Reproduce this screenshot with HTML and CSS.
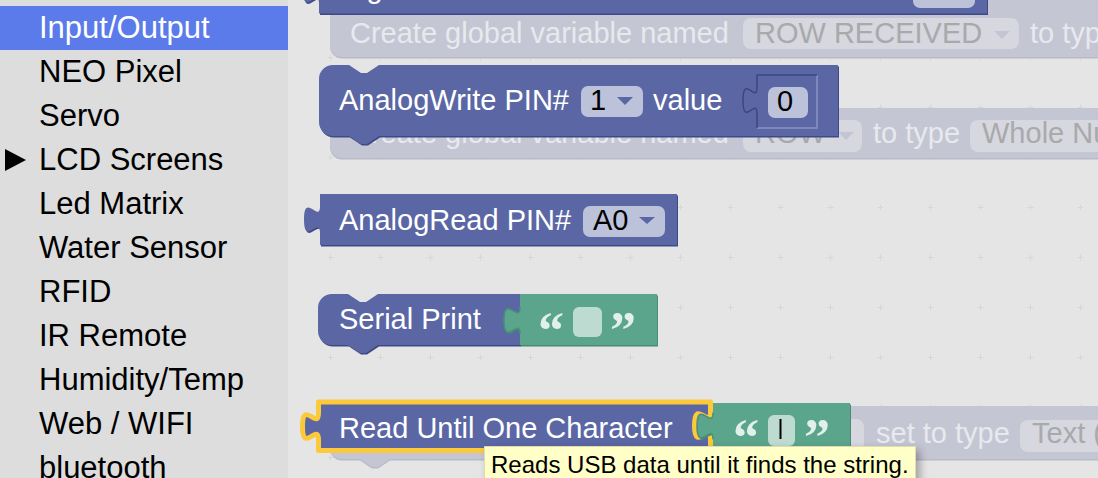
FILE: index.html
```html
<!DOCTYPE html>
<html>
<head>
<meta charset="utf-8">
<link rel="stylesheet" href="styles.css">
</head>
<body>
<div class="app">
  <nav class="toolbox">
    <div class="cat selected"><span class="twisty"></span>Input/Output</div>
    <div class="cat"><span class="twisty"></span>NEO Pixel</div>
    <div class="cat"><span class="twisty"></span>Servo</div>
    <div class="cat"><span class="twisty arrow"></span>LCD Screens</div>
    <div class="cat"><span class="twisty"></span>Led Matrix</div>
    <div class="cat"><span class="twisty"></span>Water Sensor</div>
    <div class="cat"><span class="twisty"></span>RFID</div>
    <div class="cat"><span class="twisty"></span>IR Remote</div>
    <div class="cat"><span class="twisty"></span>Humidity/Temp</div>
    <div class="cat"><span class="twisty"></span>Web / WIFI</div>
    <div class="cat"><span class="twisty"></span>bluetooth</div>
  </nav>
  <main class="workspace">
    <svg class="canvas" width="810" height="478" viewBox="288 0 810 478" xmlns="http://www.w3.org/2000/svg">
      <defs>
        <pattern id="grid" patternUnits="userSpaceOnUse" x="305" y="-18" width="50" height="50">
          <path class="gridmark" d="M22.5 25.5h6M25.5 22.5v6"/>
        </pattern>
      </defs>
      <rect x="288" y="0" width="810" height="478" fill="url(#grid)"/>

      <!-- faded blocks behind -->
      <g class="faded">
        <path class="fd-dark" d="M330,-20 H1110 V58.5 H342 A12,12 0 0 1 330,46.5 Z"/>
        <path class="fd" d="M330,-20 H1110 V57 H342 A12,12 0 0 1 330,45 Z"/>
        <text class="ft" x="350" y="43">Create global variable named</text>
        <rect class="fdd" x="743" y="18" width="276" height="31" rx="8"/>
        <text class="fdt" x="755" y="43">ROW RECEIVED</text>
        <polygon class="fda" points="994,31 1010,31 1002,39"/>
        <text class="ft" x="1030" y="43">to typ</text>

        <path class="fd-dark" d="M330,108 H1110 V159.5 H342 A12,12 0 0 1 330,147.5 Z"/>
        <path class="fd" d="M330,108 H1110 V158 H342 A12,12 0 0 1 330,146 Z"/>
        <text class="ft" x="350" y="143">Create global variable named</text>
        <rect class="fdd" x="743" y="120" width="119" height="32" rx="8"/>
        <text class="fdt" x="755" y="143">ROW</text>
        <polygon class="fda" points="838,132 854,132 846,140"/>
        <text class="ft" x="873" y="143">to type</text>
        <rect class="fdd" x="970" y="120" width="220" height="32" rx="8"/>
        <text class="fdt" x="982" y="143">Whole Nu</text>

        <path class="fd-dark" d="M330,406 H1110 V460.5 H390 l-12,8 h-6 l-12,-8 H342 A12,12 0 0 1 330,448.5 Z"/>
        <path class="fd" d="M330,406 H1110 V459 H390 l-12,8 h-6 l-12,-8 H342 A12,12 0 0 1 330,447 Z"/>
        <rect class="fdd" x="760" y="419" width="104" height="32" rx="8"/>
        <text class="ft" x="876" y="443">set to type</text>
        <rect class="fdd" x="1020" y="420" width="200" height="32" rx="8"/>
        <text class="fdt" x="1032" y="443">Text (</text>
      </g>

      <!-- top block (cut off) -->
      <path class="blue-dk" d="M319,-36 H987 V13.5 H319 V4 c0,-18 -16,14.4 -16,-13.5 s16,4.5 16,-13.5 Z" transform="translate(1,1.5)"/>
      <path class="blue" d="M319,-36 H987 V13.5 H319 V4 c0,-18 -16,14.4 -16,-13.5 s16,4.5 16,-13.5 Z"/>
      <text class="bt" x="339" y="-2">DigitalWrite PIN#</text>
      <rect class="fld" x="913" y="-24" width="62" height="32" rx="7"/>

      <!-- AnalogWrite -->
      <path class="blue-dk" d="M319,79 A14,14 0 0 1 333,65 H349 l12,8 h6 l12,-8 H838 V136 H379 l-12,8 h-6 l-12,-8 H333 A14,14 0 0 1 319,122 Z" transform="translate(1,1.5)"/>
      <path class="blue" d="M319,79 A14,14 0 0 1 333,65 H349 l12,8 h6 l12,-8 H838 V136 H379 l-12,8 h-6 l-12,-8 H333 A14,14 0 0 1 319,122 Z"/>
      <text class="bt" x="339" y="110">AnalogWrite PIN#</text>
      <rect class="fld" x="581" y="86" width="62" height="31" rx="7"/>
      <text class="vt" x="590" y="110">1</text>
      <polygon class="arr" points="617,97 633,97 625,105"/>
      <text class="bt" x="653" y="110">value</text>
      <path class="slot-lt" d="M817,75 V128 H757"/>
      <path class="slot-dk" d="M757,128 V114 c0,-18 -14,14.4 -14,-13.5 s14,4.5 14,-13.5 V75 H817"/>
      <rect class="fld" x="768" y="87" width="40" height="31" rx="7"/>
      <text class="vt" x="777" y="111">0</text>

      <!-- AnalogRead -->
      <path class="blue-dk" d="M320,194 H677 V245 H320 V233 c0,-18 -16,14.4 -16,-13.5 s16,4.5 16,-13.5 Z" transform="translate(1,1.5)"/>
      <path class="blue" d="M320,194 H677 V245 H320 V233 c0,-18 -16,14.4 -16,-13.5 s16,4.5 16,-13.5 Z"/>
      <text class="bt" x="339" y="230">AnalogRead PIN#</text>
      <rect class="fld" x="583" y="206" width="82" height="31" rx="7"/>
      <text class="vt" x="593" y="230">A0</text>
      <polygon class="arr" points="639,217 655,217 647,224"/>

      <!-- Serial Print -->
      <path class="blue-dk" d="M318,308 A14,14 0 0 1 332,294 H348 l12,8 h6 l12,-8 H520 V345 H378 l-12,8 h-6 l-12,-8 H332 A14,14 0 0 1 318,331 Z" transform="translate(1,1.5)"/>
      <path class="blue" d="M318,308 A14,14 0 0 1 332,294 H348 l12,8 h6 l12,-8 H520 V345 H378 l-12,8 h-6 l-12,-8 H332 A14,14 0 0 1 318,331 Z"/>
      <text class="bt" x="339" y="329">Serial Print</text>
      <path class="green-dk" d="M520,294 H657 V345 H520 V334 c0,-18 -16,14.4 -16,-13.5 s16,4.5 16,-13.5 Z" transform="translate(1,1.5)"/>
      <path class="green" d="M520,294 H657 V345 H520 V334 c0,-18 -16,14.4 -16,-13.5 s16,4.5 16,-13.5 Z"/>
      <path class="tab-edge" d="M520,334 c0,-18 -16,14.4 -16,-13.5 s16,4.5 16,-13.5"/>
      <text class="qt" x="538" y="348">“</text>
      <rect class="gfld" x="573" y="307" width="29" height="30" rx="6"/>
      <text class="qt" x="610" y="348">”</text>

      <!-- Read Until One Character (selected) -->
      <path class="blue sel" d="M318.5,402 H710.5 V412 c0,18 -16,-14.4 -16,13.5 s16,-4.5 16,13.5 V450.5 H318.5 V440 c0,-18 -16,14.4 -16,-13.5 s16,4.5 16,-13.5 Z"/>
      <text class="bt" x="339" y="438">Read Until One Character</text>
      <path class="green-dk" d="M713,403 H850 V451 H713 V439.5 c0,-18 -16,14.4 -16,-13.5 s16,4.5 16,-13.5 Z" transform="translate(1,1.5)"/>
      <path class="green" d="M713,403 H850 V451 H713 V439.5 c0,-18 -16,14.4 -16,-13.5 s16,4.5 16,-13.5 Z"/>
      <path class="tab-edge" d="M713,439.5 c0,-18 -16,14.4 -16,-13.5 s16,4.5 16,-13.5"/>
      <text class="qt" x="733" y="455">“</text>
      <rect class="gfld" x="768" y="415" width="27" height="31" rx="6"/>
      <path class="cursor" d="M780.5,419 V439"/>
      <text class="qt" x="804" y="455">”</text>
    </svg>
    <div class="tooltip">Reads USB data until it finds the string.</div>
  </main>
</div>
</body>
</html>
```
FILE: styles.css
```css
html, body {
  margin: 0;
  padding: 0;
  background: #e5e5e5;
  font-family: "Liberation Sans", Arial, sans-serif;
}

.app {
  display: flex;
  width: 1098px;
  height: 478px;
  overflow: hidden;
}

.toolbox {
  width: 288px;
  flex: none;
  background: #dddddd;
  padding-top: 6px;
  box-sizing: border-box;
}

.cat {
  height: 44px;
  line-height: 44px;
  font-size: 31px;
  color: #000;
  display: flex;
  align-items: center;
  white-space: nowrap;
}

.cat.selected {
  background: #5a7be9;
  color: #fff;
}

.twisty {
  width: 39px;
  flex: none;
  display: flex;
  align-items: center;
  padding-left: 5px;
  box-sizing: border-box;
}

.twisty.arrow::before {
  content: "";
  display: block;
  width: 0;
  height: 0;
  border-left: 21px solid #000;
  border-top: 11px solid transparent;
  border-bottom: 11px solid transparent;
}

.workspace {
  flex: 1;
  position: relative;
  overflow: hidden;
  background: #e5e5e5;
}

.canvas {
  display: block;
}

.gridmark {
  stroke: #d7d7d7;
  stroke-width: 1;
  fill: none;
}

.canvas text {
  font-family: "Liberation Sans", Arial, sans-serif;
  font-size: 29px;
}

.fd { fill: #c5c6d3; }
.fd-dark { fill: #b9bac8; }
.ft { fill: #e8e9ee; }
.fdd { fill: #d6d7df; }
.fdt { fill: #a9a9ab; }
.fda { fill: #c3c5d4; }

.blue { fill: #5b67a5; }
.blue-dk { fill: #3f4a85; }
.blue.sel {
  stroke: #fbc93a;
  stroke-width: 5;
  stroke-linejoin: round;
}
.green { fill: #5ba58c; }
.green-dk { fill: #478b73; }
.tab-edge {
  fill: none;
  stroke: #4a8f77;
  stroke-width: 1.5;
}

.canvas .bt { fill: #ffffff; }
.canvas .vt { fill: #000000; }
.fld { fill: #bdc2db; }
.gfld { fill: #bddbd1; }
.arr { fill: #5b67a5; }

.slot-lt {
  fill: none;
  stroke: #8c94c4;
  stroke-width: 1.5;
}
.slot-dk {
  fill: none;
  stroke: #3d467e;
  stroke-width: 1.5;
}

.canvas .qt {
  font-family: "Liberation Serif", "Times New Roman", serif;
  font-weight: bold;
  font-size: 52px;
  fill: #e2f0ea;
}

.cursor {
  stroke: #000;
  stroke-width: 2;
}

.tooltip {
  position: absolute;
  left: 196px;
  top: 446px;
  background: #ffffc7;
  border: 1px solid #deddb0;
  padding: 2px 6px;
  font-size: 24px;
  line-height: 32px;
  color: #000;
  white-space: nowrap;
  box-shadow: 4px 4px 8px rgba(0, 0, 0, 0.3);
}
```
